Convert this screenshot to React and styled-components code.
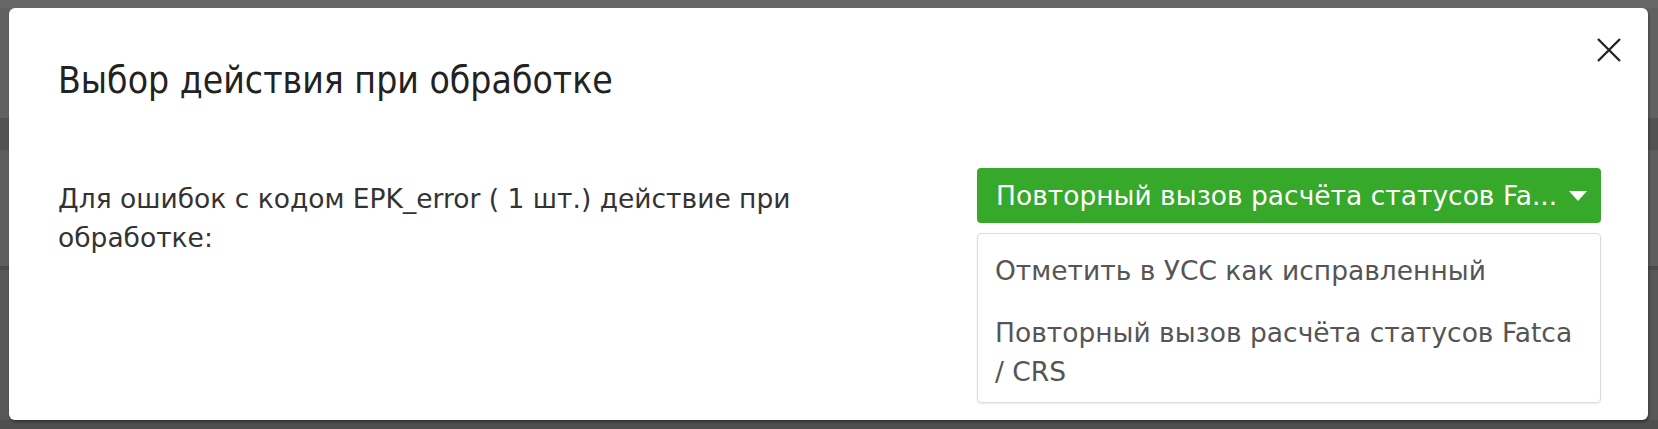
import React from 'react';
import styled, { createGlobalStyle } from 'styled-components';

const GlobalStyle = createGlobalStyle`
  html, body { margin: 0; padding: 0; }
  body {
    font-family: "DejaVu Sans", "Liberation Sans", sans-serif;
    color: #333;
  }
`;

// dimmed page behind the modal
const Backdrop = styled.div`
  box-sizing: border-box;
  width: 100%;
  height: 429px;
  padding: 8px 10px 9px 9px;
  background: linear-gradient(
    to bottom,
    #676767 0px, #676767 8px,
    #616161 8px, #616161 118px,
    #525252 118px, #525252 150px,
    #5e5e5e 150px, #5e5e5e 266px,
    #4b4b4b 266px, #4b4b4b 270px,
    #575757 270px, #575757 420px,
    #4f4f4f 420px
  );
`;

const Modal = styled.div`
  position: relative;
  box-sizing: border-box;
  height: 100%;
  background: #fff;
  border-radius: 6px;
  box-shadow: 1px 2px 3px rgba(0, 0, 0, 0.35);
  padding: 51px 47px 0 49px;
`;

const Title = styled.h2`
  margin: 0;
  font-family: "DejaVu Sans Condensed", "DejaVu Sans", sans-serif;
  font-size: 37px;
  line-height: 43px;
  font-weight: 400;
  color: #222;
`;

const CloseButton = styled.button`
  position: absolute;
  top: 30px;
  right: 27px;
  width: 24px;
  height: 24px;
  padding: 0;
  border: 0;
  background: none;
  cursor: pointer;
  svg { display: block; }
`;

const Row = styled.div`
  display: flex;
  align-items: flex-start;
  justify-content: space-between;
  margin-top: 66px;
`;

const Label = styled.div`
  width: 760px;
  margin-top: 11px;
  font-size: 26.5px;
  line-height: 39px;
  color: #333;
`;

const SelectBox = styled.div`
  position: relative;
  width: 624px;
`;

const Trigger = styled.div`
  box-sizing: border-box;
  display: flex;
  align-items: center;
  height: 55px;
  padding: 0 14px 0 19px;
  background: #36a82a;
  border-radius: 4px;
  color: #fff;
  font-size: 26.5px;
`;

const TriggerText = styled.span`
  flex: 1;
  min-width: 0;
  white-space: nowrap;
`;

const Caret = styled.span`
  width: 0;
  height: 0;
  border-left: 9.5px solid transparent;
  border-right: 9.5px solid transparent;
  border-top: 10px solid #fff;
`;

const Menu = styled.ul`
  list-style: none;
  margin: 10px 0 0;
  padding: 5px 0 0;
  background: #fff;
  border: 1px solid #dcdcdc;
  border-radius: 4px;
  box-shadow: 0 1px 2px rgba(0, 0, 0, 0.08);
`;

const Option = styled.li`
  padding: 12px 17px 11px;
  font-size: 26.5px;
  line-height: 39px;
  color: #555;
  cursor: pointer;
`;

const options = [
  'Отметить в УСС как исправленный',
  'Повторный вызов расчёта статусов Fatca / CRS',
];

// the select shows its value cut short, as the real control does
const shortLabel = (text, n) => (text.length > n ? text.slice(0, n) + '...' : text);

export default function App() {
  const selected = options[1];
  return (
    <Backdrop>
      <GlobalStyle />
      <Modal>
        <CloseButton aria-label="Закрыть">
          <svg width="24" height="24" viewBox="0 0 24 24">
            <path d="M1 1 L23 23 M23 1 L1 23" stroke="#222" strokeWidth="2.3" />
          </svg>
        </CloseButton>
        <Title>Выбор действия при обработке</Title>
        <Row>
          <Label>Для ошибок с кодом EPK_error ( 1 шт.) действие при обработке:</Label>
          <SelectBox>
            <Trigger title={selected}>
              <TriggerText>{shortLabel(selected, 35)}</TriggerText>
              <Caret />
            </Trigger>
            <Menu>
              {options.map((o) => (
                <Option key={o}>{o}</Option>
              ))}
            </Menu>
          </SelectBox>
        </Row>
      </Modal>
    </Backdrop>
  );
}
